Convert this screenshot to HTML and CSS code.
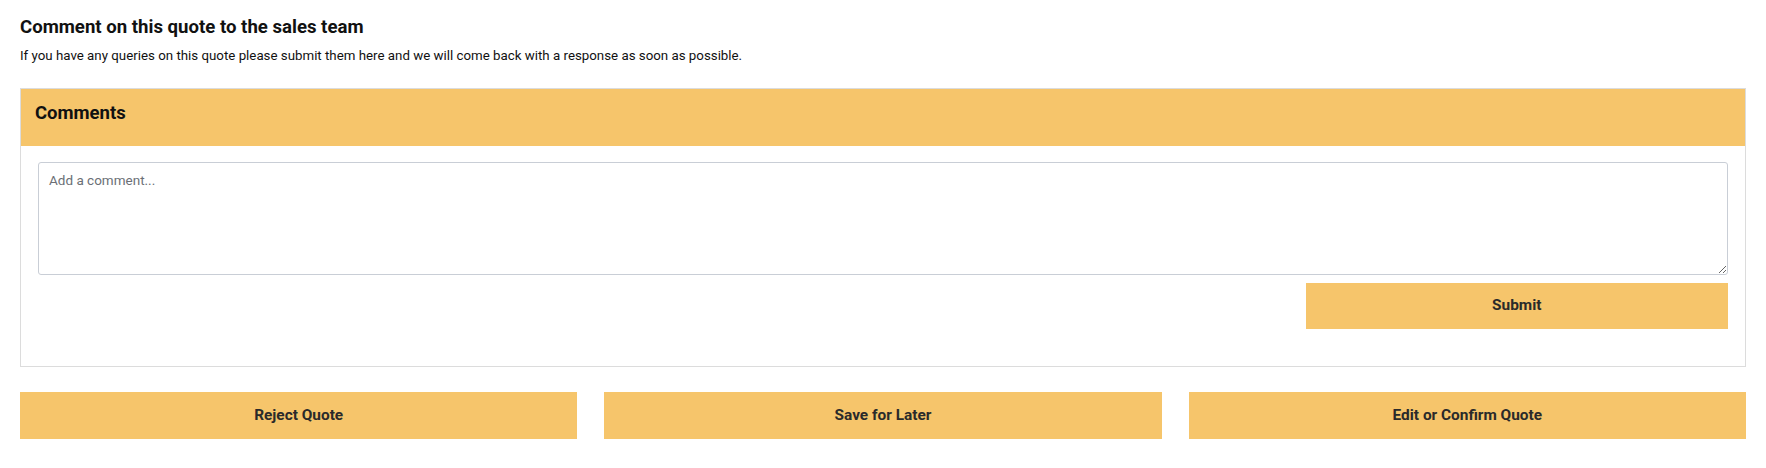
FILE: index.html
```html
<!DOCTYPE html>
<html lang="en">
<head>
<meta charset="utf-8">
<title>Comment on this quote</title>
<link rel="stylesheet" href="styles.css">
</head>
<body>
<div class="page">
  <h2 class="title">Comment on this quote to the sales team</h2>
  <p class="intro">If you have any queries on this quote please submit them here and we will come back with a response as soon as possible.</p>
  <section class="card">
    <div class="card-head">Comments</div>
    <div class="card-body">
      <textarea class="comment" placeholder="Add a comment..."></textarea>
      <div class="submit-row">
        <button class="btn submit">Submit</button>
      </div>
    </div>
  </section>
  <div class="actions">
    <button class="btn">Reject Quote</button>
    <button class="btn">Save for Later</button>
    <button class="btn">Edit or Confirm Quote</button>
  </div>
</div>
</body>
</html>
```

FILE: styles.css
```css
* { box-sizing: border-box; }
html, body { margin: 0; padding: 0; background: #fff; }
body {
  font-family: Roboto, "Liberation Sans", Arial, sans-serif;
  color: #111;
}
.page {
  padding: 15px 20px 20px 20px;
}
.title {
  margin: 0;
  font-size: 18.6px;
  line-height: 24px;
  font-weight: 700;
  color: #111;
}
.intro {
  margin: 7px 0 0 0;
  font-size: 13.3px;
  line-height: 20px;
  color: #111;
}
.card {
  margin-top: 22px;
  border: 1px solid #dcdcdc;
  background: #fff;
}
.card-head {
  background: #f6c56b;
  padding: 12px 14px 21px;
  font-size: 18.5px;
  line-height: 24px;
  font-weight: 700;
  color: #111;
}
.card-body {
  padding: 16px 17px 37px 17px;
}
.comment {
  display: block;
  width: 100%;
  height: 113px;
  border: 1px solid #c9ced6;
  border-radius: 3px;
  padding: 8px 10px;
  font-family: Roboto, "Liberation Sans", Arial, sans-serif;
  font-size: 13.5px;
  line-height: 18px;
  color: #333;
  resize: vertical;
  background: #fff;
}
.comment::placeholder { color: #6b6f76; }
.submit-row {
  display: flex;
  justify-content: flex-end;
  margin-top: 8px;
}
.btn {
  display: block;
  border: 0;
  background: #f6c56b;
  height: 47px;
  font-family: Roboto, "Liberation Sans", Arial, sans-serif;
  font-size: 15.4px;
  font-weight: 700;
  color: #2a2a2a;
  cursor: pointer;
  padding: 0 10px 2px;
}
.submit {
  width: 25%;
  height: 46px;
}
.actions {
  margin-top: 25px;
  display: grid;
  grid-template-columns: repeat(3, 1fr);
  column-gap: 27px;
}
```
